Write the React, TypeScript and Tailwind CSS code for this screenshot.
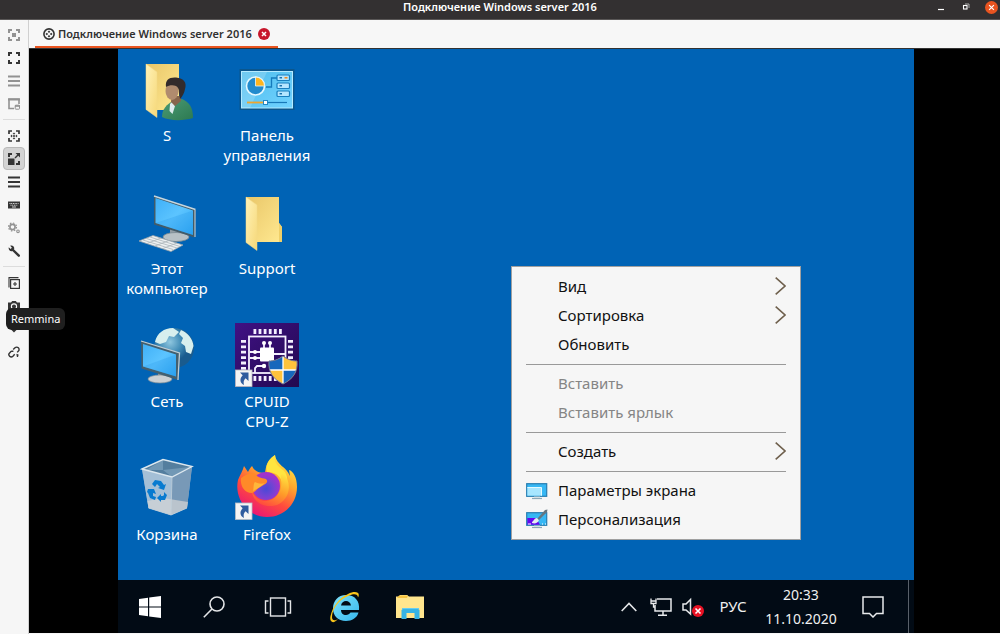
import type { ReactNode } from "react";

const CORNERS = "M1 4V1h3M8 1h3v3M11 8v3H8M4 11H1V8";

function Glyph({ children }: { children: ReactNode }) {
  return (
    <svg viewBox="0 0 12 12" className="h-3 w-3" fill="none" stroke="currentColor" strokeWidth="2" aria-hidden="true">
      {children}
    </svg>
  );
}

type Tool = { label: string; dim?: boolean; active?: boolean; icon: ReactNode };

const toolGroups: Tool[][] = [
  [
    { label: "Fit window", dim: true, icon: <Glyph><path d={CORNERS} /><rect x="4" y="4" width="4" height="4" fill="currentColor" stroke="none" /></Glyph> },
    { label: "Fullscreen", icon: <Glyph><path d={CORNERS} /></Glyph> },
    { label: "Menu", dim: true, icon: <Glyph><path d="M0 1.5h12M0 6h12M0 10.5h12" strokeWidth="1.8" /></Glyph> },
    { label: "Switch tab", dim: true, icon: <Glyph><path d="M6 10.5H1V1h10v5" strokeWidth="1.6" /><path d="M0 1.5h12" /><rect x="7.2" y="7.2" width="4.3" height="4" rx=".6" strokeWidth="1" /><path d="M7 8h5" strokeWidth="1.6" /></Glyph> },
  ],
  [
    { label: "Dynamic resolution", icon: <Glyph><path d={CORNERS} strokeWidth="1.7" /><path d="M6 4.500v3M4.500 6h3" strokeWidth="1" /><path d="M4.600 4 6 2.400 7.400 4zM4.600 8 6 9.600 7.400 8zM4 4.600 2.400 6 4 7.400zM8 4.600 9.600 6 8 7.400z" fill="currentColor" stroke="none" /></Glyph> },
    { label: "Scaled mode", active: true, icon: <Glyph><path d="M1 4V1h3M11 8v3H8" /><rect x="0" y="5.5" width="6.5" height="6.5" fill="currentColor" stroke="none" /><path d="M7 5l3.5-3.5" strokeWidth="1.5" /><path d="M7.5 0H12v4.5z" fill="currentColor" stroke="none" /></Glyph> },
    { label: "Options", icon: <Glyph><path d="M0 1.5h12M0 6h12M0 10.5h12" strokeWidth="1.8" /></Glyph> },
    { label: "Grab keyboard", icon: <Glyph><rect x="0" y="2.5" width="12" height="7" fill="currentColor" stroke="none" /><path d="M1.5 4.5h9M2.5 6.2h7" stroke="#f6f6f6" strokeWidth=".9" strokeDasharray="1 .7" /><path d="M4 8h4" stroke="#f6f6f6" strokeWidth=".8" /></Glyph> },
    { label: "Preferences", dim: true, icon: <Glyph><circle cx="4.5" cy="5" r="2.6" strokeWidth="1.6" /><circle cx="4.5" cy="5" r="4" strokeWidth="1.2" strokeDasharray="1.5 1.64" /><circle cx="10" cy="9.3" r="1.3" strokeWidth="1.1" /></Glyph> },
    { label: "Tools", icon: <Glyph><path d="M4.5 4.5 10.8 10.7" strokeWidth="2.4" strokeLinecap="round" /><path d="M.7 2.2 2.6 4l1.3-1.2L2.2.8C4.500 0 6.600 1.600 6.200 4L4.200 6.200C1.800 6.600.2 4.600.7 2.200z" fill="currentColor" stroke="none" /></Glyph> },
  ],
  [
    { label: "Duplicate connection", icon: <Glyph><path d="M1 10.500V.6h9.500" strokeWidth="1.1" /><rect x="2.600" y="2.600" width="8.800" height="8.800" strokeWidth="1.200" /><path d="M7 5v4M5 7h4" strokeWidth="1.100" /></Glyph> },
    { label: "Screenshot", icon: <Glyph><path d="M0 2.500h3L4.200 1h3.600L9 2.500h3V11H0z" fill="currentColor" stroke="none" /><circle cx="6" cy="6.500" r="2.600" stroke="#f6f6f6" strokeWidth="1.100" /></Glyph> },
    { label: "Minimize", icon: <Glyph><path d="M2.500 4.500 6 8l3.500-3.500" /></Glyph> },
    { label: "Disconnect", icon: <Glyph><path d="M5.200 3.600 7 1.800a2.300 2.300 0 0 1 3.400 3.300L9.200 6.400M6.700 8.300 4.900 10.200A2.300 2.300 0 0 1 1.600 6.900L3.200 5.300M3.200 5.300h2.200M9.500 9v2M8.500 8.500l2 .8" strokeWidth="1.400" /></Glyph> },
  ],
];

function Sidebar() {
  return (
    <aside className="flex w-[29px] shrink-0 flex-col items-center border-r border-[#d0d0d0] bg-[#f6f6f6] pt-[3px]">
      {toolGroups.map((group, index) => (
        <div key={index} className="flex flex-col items-center">
          {index > 0 && <div className="my-1 h-px w-[22px] bg-[#dcdcdc]" />}
          {group.map((tool) => (
            <button
              key={tool.label}
              type="button"
              aria-label={tool.label}
              className={`flex h-[23px] w-[22px] items-center justify-center rounded-sm ${tool.dim ? "text-[#929292]" : "text-[#353535]"} ${tool.active ? "border border-[#b9b9b9] bg-[#d3d3d3]" : ""}`}
            >
              {tool.icon}
            </button>
          ))}
        </div>
      ))}
    </aside>
  );
}

function TitleBar() {
  return (
    <header className="grid h-5 shrink-0 grid-cols-[1fr_auto_1fr] items-start border-b border-[#5a5757] bg-[#333031] text-white">
      <span />
      <h1 className="text-[11px] leading-[14px] font-semibold">Подключение Windows server 2016</h1>
      <div className="flex h-[14px] items-center justify-end gap-[13px] pr-[3px]">
        <button type="button" aria-label="Minimize window" className="flex h-3 w-3 items-center justify-center">
          <svg viewBox="0 0 12 12" className="h-3 w-3" aria-hidden="true"><path d="M3 8.500h6" stroke="#fff" strokeWidth="1.200" /></svg>
        </button>
        <button type="button" aria-label="Restore window" className="flex h-3 w-3 items-center justify-center">
          <svg viewBox="0 0 12 12" className="h-3 w-3" fill="none" aria-hidden="true"><path d="M5 3h4v4" stroke="#aaa" /><rect x="3.500" y="4.500" width="3.500" height="3.500" stroke="#fff" strokeWidth="1.100" /></svg>
        </button>
        <button type="button" aria-label="Close window" className="flex h-3 w-3 items-center justify-center">
          <svg viewBox="0 0 12 12" className="h-[13px] w-[13px] shrink-0" aria-hidden="true"><circle cx="6" cy="6" r="6" fill="#e95420" /><path d="m3.800 3.800 4.400 4.400m0-4.400L3.800 8.200" stroke="#fff" strokeWidth="1.100" /></svg>
        </button>
      </div>
    </header>
  );
}

function TabBar() {
  return (
    <nav className="flex h-7 shrink-0 items-stretch bg-[#f7f7f7] pl-[6px]">
      <div className="flex items-center gap-[3px] border-b-2 border-[#e95420] px-2 pt-[2px]">
        <svg viewBox="0 0 12 12" className="h-3 w-3 shrink-0" fill="none" stroke="#333" aria-hidden="true">
          <circle cx="6" cy="6" r="5.100" strokeWidth="1.600" />
          <path d="M6 2.500 7.300 3.800 6 5.100 4.700 3.800zM6 6.900l1.300 1.300L6 9.500 4.700 8.200zM3.800 4.700 5.100 6 3.800 7.300 2.500 6zM8.200 4.700 9.500 6 8.200 7.300 6.900 6z" fill="#333" stroke="none" />
        </svg>
        <button type="button" className="text-[11px] leading-4 font-semibold whitespace-nowrap text-[#303030]">Подключение Windows server 2016</button>
        <button type="button" aria-label="Close tab" className="ml-[3px]">
          <svg viewBox="0 0 12 12" className="h-3 w-3" aria-hidden="true"><circle cx="6" cy="6" r="6" fill="#c7162b" /><path d="m4 4 4 4m0-4L4 8" stroke="#fff" strokeWidth="1.500" /></svg>
        </button>
      </div>
    </nav>
  );
}

function Svg64({ children }: { children: ReactNode }) {
  return <svg viewBox="0 0 64 64" className="h-16 w-16 overflow-visible" aria-hidden="true">{children}</svg>;
}

function ShortcutArrow() {
  return (
    <g>
      <rect x=".5" y="47" width="16.500" height="16.500" fill="#f4f4f4" stroke="#b9bdc4" strokeWidth=".8" />
      <path d="M5 49.500h8.500V58l-2.900-2.700C8.600 57 8.300 59.300 9 62 5.200 60.500 4 56 7.700 52.300z" fill="#2f5c9e" />
    </g>
  );
}

function FolderFront() {
  return <path d="M11 7 22 15V60.500L11 52.500z" fill="url(#flap)" stroke="#f3d98a" strokeWidth=".5" />;
}

function UserIcon() {
  return (
    <Svg64>
      <path d="M11 7H44V53H11z" fill="url(#fold)" />
      <FolderFront />
      <path d="M27 60C27 52 32 47 38 44L47 42C54 45 58 50 58 61 48 64 35 64 27 60z" fill="url(#shirt)" />
      <path d="M35 47 37 45 40 49 37.500 57 34.500 54z" fill="#dfecee" />
      <path d="M36.500 39 46 39V44L40 49 36 45z" fill="#86654c" />
      <ellipse cx="37" cy="34" rx="6.500" ry="9" fill="#b08b6e" />
      <path d="M31 30C30 23 34 20 41 20.500 49 21 52 26 50 32 49.500 36 47 40 45 42L44 36C44 32 43 30 41 29 38 27.500 34 28 31 30z" fill="#332b2b" />
    </Svg64>
  );
}

function FolderIcon() {
  return (
    <Svg64>
      <path d="M11 7H44V33L47 37V52H11z" fill="url(#fold)" />
      <path d="M44 33 47 37V52H44z" fill="#efcf68" />
      <FolderFront />
    </Svg64>
  );
}

function ControlPanelIcon() {
  return (
    <Svg64>
      <rect x="4.500" y="12" width="55" height="41" fill="#0b568d" />
      <rect x="6.500" y="14.500" width="51" height="36.500" fill="url(#panel)" stroke="#b5eaff" />
      <path d="M7 15H32L15 51H7z" fill="#fff" opacity=".18" />
      <circle cx="20.500" cy="29" r="9" fill="#238bcd" stroke="#e4f8ff" strokeWidth="1.600" />
      <path d="M20.500 29V20A9 9 0 0 1 29.500 29z" fill="#ffb51f" stroke="#e4f8ff" strokeWidth=".8" />
      <path d="M31 30H36.500V21H42" fill="none" stroke="#157abc" strokeWidth="1.300" />
      {[18, 26, 34].map((y) => (
        <g key={y}>
          <rect x="42" y={y} width="12.500" height="5.500" rx="1" fill="#b5e6ff" stroke="#197fbe" strokeWidth="1.200" />
          <path d={`M44.500 ${y + 2.750}h2.500`} stroke="#126ba9" strokeWidth="1.400" />
        </g>
      ))}
      <path d="M49.500 20.750h3" stroke="#f18a23" strokeWidth="1.600" />
      <path d="M12 45.500H28" stroke="#f0a62d" strokeWidth="1.800" />
      <path d="M33 45.500H52" stroke="#1878b8" strokeWidth="1.200" />
      <rect x="28.500" y="43.500" width="4" height="4" fill="#fff" stroke="#2388c5" />
    </Svg64>
  );
}

function ComputerIcon() {
  return (
    <Svg64>
      <path d="M35 38 47 41V47H35z" fill="#929da4" />
      <ellipse cx="41" cy="47" rx="13" ry="4.500" fill="#b8c1c5" stroke="#76868f" strokeWidth=".8" />
      <path d="M19 6 60.500 19.500 59.500 47.500 19 34.500z" fill="#435b68" />
      <path d="M19 6 60.500 19.500" stroke="#c6d6de" strokeWidth="1.400" />
      <path d="M20.500 8 58 20.500V45L20.500 33z" fill="url(#screen)" />
      <path d="M58 20.500 20.500 33 58 45z" fill="#1489df" opacity=".2" />
      <path d="M60 20V47" stroke="#bac5ca" strokeWidth="1.200" />
      <path d="M4 51 18 45.500 48 55 36 61.500z" fill="#edf0f1" stroke="#98a2a8" strokeWidth=".8" />
      <path d="M8 50 38 59.500M11.500 48.500 42 58M15 47 45 56.500M12 53.500 26 48M20 56 34 50.500M28 58.500 42 53" stroke="#abb4b9" strokeWidth=".8" />
    </Svg64>
  );
}

function NetworkIcon() {
  return (
    <Svg64>
      <circle cx="39" cy="25" r="20" fill="url(#globe)" />
      <path d="M20 19C22 10 29 5 38 5L44 9 39 14 34 13 31 19 25 21zM46 7C53 10 58 16 58.500 23L56 31 51 29 50 23 46 20 48 15 44 11z" fill="#d7efee" />
      <path d="M23 48 32 50V57H23z" fill="#8b969e" />
      <ellipse cx="25" cy="56" rx="12" ry="4" fill="#cbd0d3" stroke="#7d8b94" strokeWidth=".7" />
      <path d="M6 18 44.500 30 43 57 6.500 45.500z" fill="#436070" />
      <path d="M6 18 44.500 30 43 57" fill="none" stroke="#c0cdd4" strokeWidth="1.300" />
      <path d="M8 21 41 31.500V53.500L8 43.500z" fill="url(#screen)" />
      <path d="M41 31.500 8 43.500 41 53.500z" fill="#1489df" opacity=".2" />
    </Svg64>
  );
}

function CpuIcon() {
  return (
    <Svg64>
      <rect width="64" height="64" fill="url(#cpu)" />
      <g fill="none" stroke="#f4efff" strokeWidth="1.800">
        <rect x="14" y="13.500" width="36.500" height="36.500" />
        <path d="M18.500 8.500H47M18.500 55.500H47" strokeWidth="5" strokeDasharray="2.800 2.300" />
        <path d="M8.500 17V47M55.500 17V47" strokeWidth="5" strokeDasharray="2.800 2.600" />
        <path d="M29 20V25M35 20V25M15 29H25M15 35H25M39 31H50M28 43H22L20 45V50" />
      </g>
      <rect x="25" y="24.500" width="14" height="14" rx="1" fill="#fff" />
      <g fill="#fff"><circle cx="29" cy="20" r="2" /><circle cx="35" cy="20" r="2" /><circle cx="20" cy="29" r="2" /><circle cx="20" cy="35" r="2" /><circle cx="29" cy="43" r="2.200" /></g>
      <g clipPath="url(#shield)">
        <path d="M33 32H64V63H33z" fill="#ffc33c" />
        <path d="M33 32H48V47H33zM48 47H64V63H48z" fill="#1767bc" />
        <path d="M48 32V63M33 47H63" stroke="#fff" strokeWidth="1.300" />
      </g>
      <path d="M48 33C43 37 38 38 34 38 33 49 38 56 48 61 58 56 63 49 62 38 58 38 53 37 48 33z" fill="none" stroke="#777b95" />
      <ShortcutArrow />
    </Svg64>
  );
}

function RecycleIcon() {
  return (
    <Svg64>
      <path d="M7 13 28 3.500 57 10.500 52 52 36 59 13.500 52z" fill="#8fb1cf" />
      <path d="M7 13 28 3.500 57 10.500 37 21z" fill="#547e9e" />
      <path d="M28 4V14L11 14zM28 14 37 21 55 11z" fill="#7198b5" />
      <path d="M7 13 37 21 36 59 13.500 52z" fill="#a4bfd6" />
      <path d="M37 21 57 10.500 52 52 36 59z" fill="#7899b7" />
      <path d="M12.500 45 28 42 53 46 52 52 36 59 13.500 52z" fill="#d5d5d5" opacity=".7" />
      <path d="M7 13 28 3.500 57 10.500 37 21z" fill="none" stroke="#dce7ee" strokeWidth="1.400" />
      <path d="M37 21 36 59M13.500 52 36 59 52 52" fill="none" stroke="#c1d0da" strokeWidth=".8" />
      <g fill="#087bd0">
        <path d="M17 28 20 24 26 25 29 29 31 28 29 34 23 32 25 31 22 28 20 31z" />
        <path d="M13 33 19 33 21 38 18 37 18 40 21 41 20 44 15 42 13 37 12 36z" />
        <path d="M29 36 32 39 30 44 26 44V46L22 42 26 38V40H28L29 39z" />
      </g>
    </Svg64>
  );
}

function FirefoxIcon() {
  return (
    <Svg64>
      <path d="M40-1C32 4 31 10 30 17 25 17 22 16 20 14 18 13 18 11 17 10 15 12 14 14 13 16L9 10C8 14 5 19 3 24-1 42 12 61 32 61 49 61 62 48 62 31 62 21 58 15 54 14L55 20C51 10 42 10 40-1z" fill="url(#fox)" />
      <circle cx="31" cy="30" r="14" fill="url(#orb)" />
      <path d="M40-1C30 6 31 13 32 16 45 16 50 26 46 36 55 28 53 18 48 14 42 9 39 7 40-1z" fill="#ffe53f" />
      <path d="M46 22C48 34 42 44 31 45 24 45 20 41 17 36 19 49 34 53 44 48 55 42 57 27 49 18 47 17 45 18 46 22z" fill="url(#tail)" />
      <path d="M6 22C10 19 14 17 19 17 22 21 26 22 31 23 34 26 31 28 27 30 22 32 21 36 17 37 9 37 5 29 6 22z" fill="#ff8a28" />
      <path d="M20 26C24 28 27 28 30 27 25 31 22 33 18 35 19 32 18 28 20 26z" fill="#ffb63a" />
      <ShortcutArrow />
    </Svg64>
  );
}

function IconPaints() {
  return (
    <svg className="absolute h-0 w-0" aria-hidden="true">
      <defs>
        <linearGradient id="fold" x2="1" y2="1"><stop stopColor="#e9c668" /><stop offset="1" stopColor="#ffe991" /></linearGradient>
        <linearGradient id="flap" y2="1"><stop stopColor="#fff2b8" /><stop offset="1" stopColor="#f6d878" /></linearGradient>
        <linearGradient id="shirt" x2="1" y2="1"><stop stopColor="#4c9b76" /><stop offset="1" stopColor="#2c7950" /></linearGradient>
        <linearGradient id="panel" x2="1" y2="1"><stop stopColor="#4fbdec" /><stop offset="1" stopColor="#71d2ff" /></linearGradient>
        <linearGradient id="screen" x2="1" y2="1"><stop stopColor="#3fb0f8" /><stop offset=".5" stopColor="#5cc4ff" /><stop offset="1" stopColor="#30a8f4" /></linearGradient>
        <radialGradient id="globe" cx=".4" cy=".35"><stop stopColor="#8fc7df" /><stop offset=".6" stopColor="#3e89b4" /><stop offset="1" stopColor="#195b8e" /></radialGradient>
        <linearGradient id="cpu" y2="1"><stop stopColor="#401184" /><stop offset="1" stopColor="#220950" /></linearGradient>
        <linearGradient id="fox" x1=".8" y1="0" x2=".25" y2="1"><stop stopColor="#fff04a" /><stop offset=".35" stopColor="#ffa72c" /><stop offset=".65" stopColor="#ff4b3d" /><stop offset="1" stopColor="#e7107c" /></linearGradient>
        <linearGradient id="tail" x1=".8" y1="0" x2=".3" y2="1"><stop stopColor="#ffe33f" /><stop offset=".5" stopColor="#ff9a29" /><stop offset="1" stopColor="#ff4640" /></linearGradient>
        <radialGradient id="orb" cx=".5" cy=".6"><stop stopColor="#4949d6" /><stop offset=".55" stopColor="#7443d3" /><stop offset="1" stopColor="#a233cb" /></radialGradient>
        <clipPath id="shield"><path d="M48 33C43 37 38 38 34 38 33 49 38 56 48 61 58 56 63 49 62 38 58 38 53 37 48 33z" /></clipPath>
      </defs>
    </svg>
  );
}

const shortcuts: { lines: string[]; icon: ReactNode }[] = [
  { lines: ["S"], icon: <UserIcon /> },
  { lines: ["Панель", "управления"], icon: <ControlPanelIcon /> },
  { lines: ["Этот", "компьютер"], icon: <ComputerIcon /> },
  { lines: ["Support"], icon: <FolderIcon /> },
  { lines: ["Сеть"], icon: <NetworkIcon /> },
  { lines: ["CPUID", "CPU-Z"], icon: <CpuIcon /> },
  { lines: ["Корзина"], icon: <RecycleIcon /> },
  { lines: ["Firefox"], icon: <FirefoxIcon /> },
];

function DisplayIcon({ brush = false }: { brush?: boolean }) {
  return (
    <svg viewBox="0 0 22 20" className="h-5 w-[22px]" aria-hidden="true">
      <rect x=".7" y="3.700" width="20" height="12.600" fill="#36b7f4" stroke="#287db0" strokeWidth="1.200" />
      {brush ? (
        <>
          <path d="M1.300 9H10L14 15.700H1.300z" fill="#6608ed" />
          <path d="M6 13C8 12 8 9 11 9L13 11C12 14 9 15 6 14z" fill="#e4edf0" />
          <path d="M11.500 9.500 19 1 21.500.5 21 3 13 11z" fill="#657680" />
          <path d="M2 15h3M16 15h1M19 15h1" stroke="#fff" />
        </>
      ) : (
        <>
          <path d="M1.300 7.500H15.500V15.700H1.300z" fill="#a7e6ff" />
          <path d="M1.300 7.500H15.500V15.700" fill="none" stroke="#e3faff" />
        </>
      )}
      <path d="M6 18.500h10" stroke="#8da8b7" strokeWidth="1.200" />
      <path d="M8 17h6" stroke="#c3d1d8" />
    </svg>
  );
}

type Entry = { label: string; submenu?: boolean; disabled?: boolean; icon?: ReactNode };

const menuGroups: Entry[][] = [
  [{ label: "Вид", submenu: true }, { label: "Сортировка", submenu: true }, { label: "Обновить" }],
  [{ label: "Вставить", disabled: true }, { label: "Вставить ярлык", disabled: true }],
  [{ label: "Создать", submenu: true }],
  [{ label: "Параметры экрана", icon: <DisplayIcon /> }, { label: "Персонализация", icon: <DisplayIcon brush /> }],
];

function ContextMenu() {
  return (
    <div role="menu" className="absolute top-[217px] left-[393px] w-[290px] border border-[#a0a0a0] bg-[#f6f6f6] px-[14px] pt-1 pb-[6px] text-[15px] leading-5 text-[#111]">
      {menuGroups.map((group, index) => (
        <div key={index}>
          {index > 0 && <div role="separator" className="mt-[6px] mb-[3px] h-px bg-[#999]" />}
          {group.map((entry) => (
            <button
              key={entry.label}
              type="button"
              role="menuitem"
              disabled={entry.disabled}
              className="flex h-[29px] w-full items-center gap-[10px] text-left disabled:text-[#858585]"
            >
              <span className="flex w-[22px] shrink-0">{entry.icon}</span>
              <span className="grow whitespace-nowrap">{entry.label}</span>
              {entry.submenu && (
                <svg viewBox="0 0 11 18" className="h-[18px] w-[11px]" fill="none" aria-hidden="true">
                  <path d="m.7.700 9.300 8.300L.700 17.300" stroke="#6f604d" strokeWidth="1.600" />
                </svg>
              )}
            </button>
          ))}
        </div>
      ))}
    </div>
  );
}

function Taskbar() {
  return (
    <footer className="flex h-[53px] shrink-0 items-stretch bg-[#020b15] text-[#f0f0f0]">
      <button type="button" aria-label="Start" className="flex w-16 items-center justify-center">
        <svg viewBox="0 0 22 22" className="h-[22px] w-[22px]" fill="#fff" aria-hidden="true"><path d="M0 3 9 1.800V10.400H0zM10.200 1.600 22 0V10.400H10.200zM0 11.600H9V20.200L0 19zM10.200 11.600H22V22L10.200 20.400z" /></svg>
      </button>
      <button type="button" aria-label="Search" className="flex w-16 items-center justify-center">
        <svg viewBox="0 0 22 22" className="h-[22px] w-[22px]" fill="none" stroke="#e4e6e8" strokeWidth="1.600" aria-hidden="true"><circle cx="14" cy="8" r="7" /><path d="M9 13 .8 21.200" /></svg>
      </button>
      <button type="button" aria-label="Task view" className="flex w-16 items-center justify-center">
        <svg viewBox="0 0 28 20" className="h-5 w-7" fill="none" stroke="#e4e6e8" strokeWidth="1.400" aria-hidden="true"><rect x="6.500" y="1" width="15" height="18" /><path d="M4.500 4H1.500V16H4.500M23.500 4H26.500V16H23.500" /></svg>
      </button>
      <button type="button" aria-label="Internet Explorer" className="ml-[2px] flex w-[66px] items-center justify-center">
        <svg viewBox="0 0 30 32" className="h-8 w-[30px]" aria-hidden="true">
          <path fillRule="evenodd" d="M16 4C8 4 3 10 3 17.500S8 30 16 30C22 30 27 27 28.500 21.500H20.500C19.500 23 18 24 16 24 13 24 11 22 11 19H29C30 10 25 4 16 4zM11 14.500C11.500 11.500 13.500 10 16 10S20.500 11.500 21 14.500z" fill="url(#ie)" />
          <path d="M28 6.500C28 3 24 2 18 5 9 9 2 18 2 26 2 30 5 30 8 28 4 33-1 32 .5 25 2.500 16 9 7 18 3 25-.5 31 1 28 6.500z" fill="#f9c51b" />
          <defs><linearGradient id="ie" y2="1"><stop stopColor="#7fe2fb" /><stop offset="1" stopColor="#35b6ec" /></linearGradient></defs>
        </svg>
      </button>
      <button type="button" aria-label="File Explorer" className="flex w-16 items-center justify-center">
        <svg viewBox="0 0 28 26" className="h-[26px] w-7" aria-hidden="true"><path d="M0 2.500H3L4 1H11L13 2.500H28V24H0z" fill="#ffe68e" /><path d="M3 1.500h9L11 4H1z" fill="#f7c542" /><path d="M5.500 25V16L8 14H21L23.500 16V25H18.500V19H10.500V25z" fill="#36b4e5" /><path d="M6 14.500h17" stroke="#65cdf2" /></svg>
      </button>
      <div className="ml-auto flex items-stretch">
        <button type="button" aria-label="Show hidden icons" className="flex w-8 items-center justify-center">
          <svg viewBox="0 0 16 10" className="h-[10px] w-4" fill="none" stroke="#e4e6e8" strokeWidth="1.600" aria-hidden="true"><path d="m.7 9 7.300-7.500L15.300 9" /></svg>
        </button>
        <button type="button" aria-label="Network" className="flex w-8 items-center justify-center">
          <svg viewBox="0 0 22 20" className="h-5 w-[22px]" fill="none" stroke="#e8eaec" strokeWidth="1.500" aria-hidden="true"><path d="M7 2H21V14H5V8M13 14V18M8 18.200H17" /><path d="M1 1.500V6.500H6V1.500M1 4H6M3.500 6.500V10H5" strokeWidth="1.300" /></svg>
        </button>
        <button type="button" aria-label="Volume muted" className="flex w-8 items-center justify-center">
          <svg viewBox="0 0 22 20" className="h-5 w-[22px]" aria-hidden="true"><path d="M1 7H4L8.500 2.500V17L4 13H1z" fill="none" stroke="#e8eaec" strokeWidth="1.500" /><circle cx="16" cy="14" r="6" fill="#e81123" /><path d="m13.500 11.500 5 5m0-5-5 5" stroke="#fff" strokeWidth="1.600" /></svg>
        </button>
        <button type="button" className="w-12 text-[15px]">РУС</button>
        <button type="button" className="ml-2 w-[72px] text-[14px] leading-6 whitespace-nowrap">
          <span className="block">20:33</span>
          <span className="block">11.10.2020</span>
        </button>
        <button type="button" aria-label="Notifications" className="flex w-[71px] items-center justify-center">
          <svg viewBox="0 0 22 22" className="h-[22px] w-[22px]" fill="none" stroke="#e8eaec" strokeWidth="1.500" aria-hidden="true"><path d="M1 1H21V17.500H14.500L11 21 7.500 17.500H1z" /></svg>
        </button>
        <button type="button" aria-label="Show desktop" className="w-[6px] border-l border-[#596069]" />
      </div>
    </footer>
  );
}

export default function App() {
  return (
    <div className="relative flex min-h-screen flex-col bg-[#f6f6f6] font-['Noto_Sans',sans-serif]">
      <IconPaints />
      <TitleBar />
      <div className="flex grow">
        <Sidebar />
        <div className="flex min-w-0 grow flex-col">
          <TabBar />
          <main className="mb-px grid grow grid-cols-[89fr_796fr_86fr] border-t border-[#333] bg-black">
            <section className="relative col-start-2 flex min-w-0 flex-col bg-[#0063b5]">
              <div className="grid grow grid-cols-[98px_102px] grid-rows-[133px_133px_133px_auto] content-start pt-2">
                {shortcuts.map((item) => (
                  <button key={item.lines[0]} type="button" className="flex flex-col items-center gap-1 text-[15px] leading-5 text-white">
                    {item.icon}
                    <span className="text-center">
                      {item.lines.map((line) => (
                        <span key={line} className="block">{line}</span>
                      ))}
                    </span>
                  </button>
                ))}
              </div>
              <ContextMenu />
              <Taskbar />
            </section>
          </main>
        </div>
      </div>
      <div role="tooltip" className="absolute top-[308px] left-[6px] rounded-md bg-[#1f1f1f] px-[5px] py-[3px] text-[11px] leading-4 text-white">
        Remmina
      </div>
    </div>
  );
}
